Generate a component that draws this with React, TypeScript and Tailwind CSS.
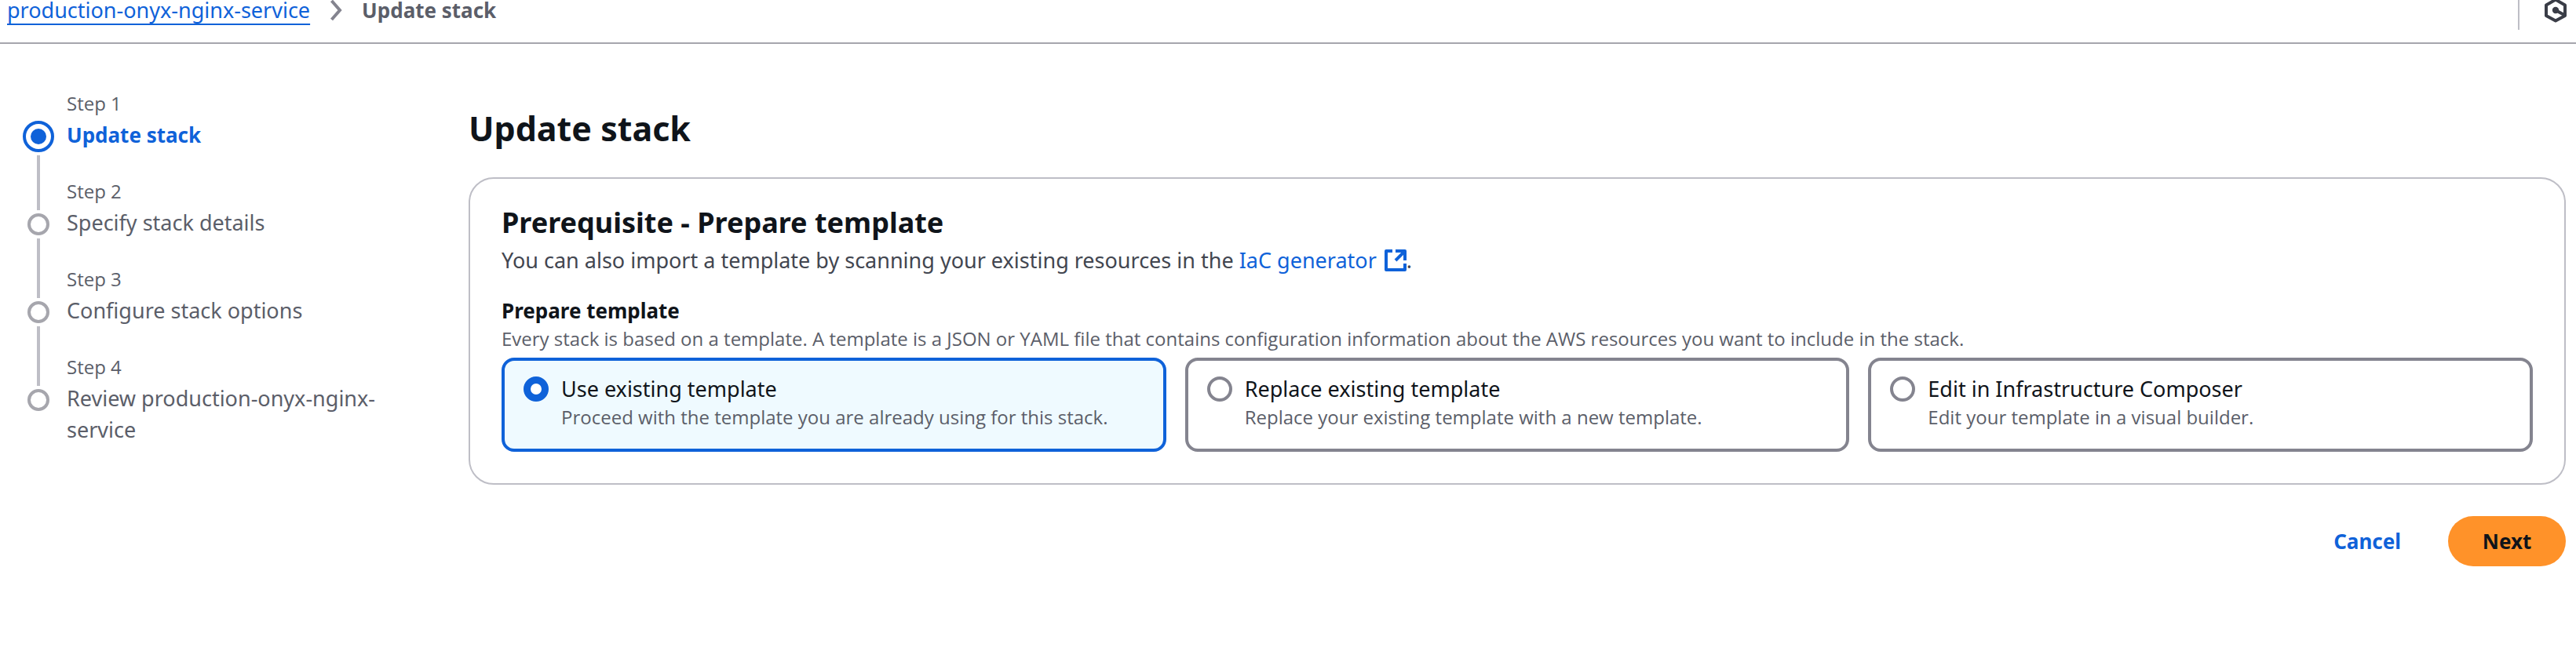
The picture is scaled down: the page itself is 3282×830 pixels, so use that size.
import React, { useState } from "react";

const steps = [
  { label: "Step 1", title: "Update stack" },
  { label: "Step 2", title: "Specify stack details" },
  { label: "Step 3", title: "Configure stack options" },
  { label: "Step 4", title: "Review production-onyx-nginx-service" },
];

const options = [
  {
    id: "existing",
    title: "Use existing template",
    text: "Proceed with the template you are already using for this stack.",
  },
  {
    id: "replace",
    title: "Replace existing template",
    text: "Replace your existing template with a new template.",
  },
  {
    id: "composer",
    title: "Edit in Infrastructure Composer",
    text: "Edit your template in a visual builder.",
  },
];

function TopBar() {
  return (
    <header className="flex h-[56px] items-start justify-between border-b-2 border-[#a6a6ad] pl-[9px] pr-[11px]">
      <nav aria-label="Breadcrumbs" className="-mt-[7px] flex items-center text-[27px] leading-[40px]">
        <a
          href="#service"
          className="text-[#0f62d9] underline decoration-2 underline-offset-[7px]"
        >
          production-onyx-nginx-service
        </a>
        <svg
          className="mx-[20px] h-[32px] w-[26px]"
          viewBox="0 0 26 32"
          fill="none"
          stroke="#84848f"
          strokeWidth="4"
          aria-hidden="true"
        >
          <path d="M7.5 4 L18 16 L7.5 28" />
        </svg>
        <span className="text-[26px] font-bold text-[#5b5e69]">Update stack</span>
      </nav>
      <div className="flex items-start gap-[31px]">
        <div className="h-[38px] w-[2px] bg-[#bebec6]" />
        <button type="button" aria-label="Service status" className="-mt-[3px]">
          <svg className="h-[32px] w-[30px]" viewBox="0 0 30 32" fill="none" stroke="#3a3d47" strokeWidth="4">
            <path d="M15 2.6 L27 9.4 V23 L15 29.6 L3 23 V9.4 Z" strokeLinejoin="round" />
            <circle cx="15" cy="16" r="4.2" fill="#3a3d47" stroke="none" />
            <path d="M15 16 L26 22" />
          </svg>
        </button>
      </div>
    </header>
  );
}

function StepNav() {
  return (
    <nav aria-label="Steps" className="w-[508px] shrink-0 pl-[29px] pt-[60px]">
      <ol>
        {steps.map((step, i) => {
          const last = i === steps.length - 1;
          return (
            <li key={step.label} className="flex gap-[16px]">
              <div className="flex w-[40px] flex-col items-center">
                {i === 0 ? (
                  <span className="mt-[38px] flex h-[40px] w-[40px] shrink-0 items-center justify-center rounded-full border-4 border-[#0f62d9]">
                    <span className="h-[20px] w-[20px] rounded-full bg-[#0f62d9]" />
                  </span>
                ) : (
                  <>
                    <span className="mb-[4px] h-[40px] w-[4px] bg-[#bebec6]" />
                    <span className="h-[28px] w-[28px] shrink-0 rounded-full border-4 border-[#a6a6ad]" />
                  </>
                )}
                {!last && <span className="mt-[4px] w-[4px] flex-1 bg-[#bebec6]" />}
              </div>
              <div className={last ? "w-[420px]" : "w-[420px] pb-[36px]"}>
                <div className="font-['Open_Sans'] text-[24px] leading-[32px] text-[#5b5e69]">{step.label}</div>
                {i === 0 ? (
                  <div aria-current="step" className="mt-[4px] text-[26px] font-bold leading-[40px] text-[#0f62d9]">
                    {step.title}
                  </div>
                ) : (
                  <div className="mt-[4px] text-[27px] leading-[40px] text-[#5b5e69]">{step.title}</div>
                )}
              </div>
            </li>
          );
        })}
      </ol>
    </nav>
  );
}

function ExternalIcon() {
  return (
    <svg
      className="ml-[10px] inline-block h-[28px] w-[28px] align-[-4px]"
      viewBox="0 0 28 28"
      fill="none"
      stroke="#0f62d9"
      strokeWidth="4"
      aria-hidden="true"
    >
      <path d="M10 2 H2 V26 H26 V18" strokeLinejoin="round" />
      <path d="M14 2 H26 V14" strokeLinejoin="round" />
      <path d="M26 2 L14 14" />
    </svg>
  );
}

export default function App() {
  const [selected, setSelected] = useState("existing");
  return (
    <div className="overflow-x-hidden bg-white font-['Noto_Sans','Open_Sans',sans-serif]">
      <TopBar />
      <div className="flex gap-[60px] pb-[100px] pr-[13px]">
        <StepNav />
        <main className="ml-[29px] min-w-0 flex-1 pt-[80px]">
          <h1 className="text-[43px] font-bold leading-[56px] text-[#0f141a]">Update stack</h1>

          <section className="mt-[34px] rounded-[32px] border-2 border-[#bebec6] px-[40px] pb-[40px] pt-[32px]">
            <h2 className="text-[36px] font-bold leading-[48px] text-[#0f141a]">
              Prerequisite - Prepare template
            </h2>
            <p className="mt-[4px] text-[27px] leading-[40px] text-[#424650]">
              You can also import a template by scanning your existing resources in the{" "}
              <a href="#iac" className="text-[#0f62d9]">
                IaC generator
                <ExternalIcon />
              </a>
              .
            </p>

            <fieldset className="mt-[24px]">
              <legend className="text-[26px] font-bold leading-[40px] text-[#0f141a]">Prepare template</legend>
              <p className="font-['Open_Sans'] text-[24px] leading-[32px] text-[#5b5e69]">
                Every stack is based on a template. A template is a JSON or YAML file that contains
                configuration information about the AWS resources you want to include in the stack.
              </p>
              <div className="mt-[8px] grid grid-cols-3 gap-[24px]">
                {options.map((o) => {
                  const on = selected === o.id;
                  return (
                    <label
                      key={o.id}
                      htmlFor={o.id}
                      className={
                        on
                          ? "flex h-[120px] items-start gap-[16px] rounded-[16px] border-4 border-[#0f62d9] bg-[#effaff] px-[24px] pt-[16px]"
                          : "flex h-[120px] items-start gap-[16px] rounded-[16px] border-4 border-[#84848f] bg-white px-[24px] pt-[16px]"
                      }
                    >
                      <input
                        id={o.id}
                        type="radio"
                        name="template"
                        checked={on}
                        onChange={() => setSelected(o.id)}
                        className="mt-[4px] h-[32px] w-[32px] shrink-0 appearance-none rounded-full border-4 border-[#84848f] bg-white checked:border-[9px] checked:border-[#0f62d9]"
                      />
                      <span className="flex flex-col">
                        <span className="text-[27px] leading-[40px] text-[#0f141a]">{o.title}</span>
                        <span className="font-['Open_Sans'] text-[24px] leading-[32px] text-[#5b5e69]">{o.text}</span>
                      </span>
                    </label>
                  );
                })}
              </div>
            </fieldset>
          </section>

          <div className="mt-[40px] flex justify-end gap-[16px]">
            <button
              type="button"
              className="h-[64px] rounded-full px-[44px] text-[26px] font-bold leading-[40px] text-[#0f62d9]"
            >
              Cancel
            </button>
            <button
              type="button"
              className="h-[64px] w-[150px] rounded-full bg-[#ff9229] text-[26px] font-bold leading-[40px] text-[#0f141a]"
            >
              Next
            </button>
          </div>
        </main>
      </div>
    </div>
  );
}
